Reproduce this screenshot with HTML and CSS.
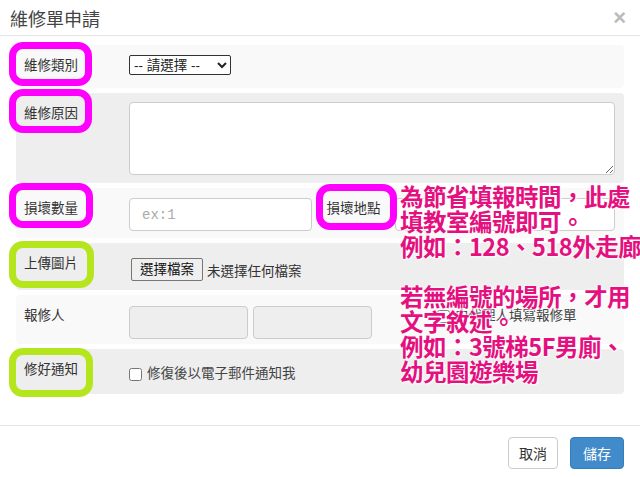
FILE: index.html
```html
<!DOCTYPE html>
<html lang="zh-Hant">
<head>
    <meta charset="UTF-8">
    <meta name="viewport" content="width=device-width, initial-scale=1.0">
    <title>維修單申請</title>
    <link rel="stylesheet" href="styles.css">
</head>
<body>
    <div class="modal">
        <div class="modal-header">
            <h4 class="modal-title">維修單申請</h4>
            <span class="close">&times;</span>
        </div>

        <div class="modal-body">
            <div class="form-row light row-type">
                <label class="row-label">維修類別</label>
                <div class="row-field">
                    <select class="type-select">
                        <option>-- 請選擇 --</option>
                    </select>
                </div>
            </div>

            <div class="form-row dark row-reason">
                <label class="row-label">維修原因</label>
                <div class="row-field">
                    <textarea class="reason"></textarea>
                </div>
            </div>

            <div class="form-row light row-amount">
                <label class="row-label">損壞數量</label>
                <div class="row-field split">
                    <input type="text" class="text-input amount" placeholder="ex:1">
                    <label class="inline-label">損壞地點</label>
                    <input type="text" class="text-input place">
                </div>
            </div>

            <div class="form-row dark row-upload">
                <label class="row-label">上傳圖片</label>
                <div class="row-field">
                    <span class="file-btn">選擇檔案</span>
                    <span class="file-name">未選擇任何檔案</span>
                </div>
            </div>

            <div class="form-row light row-reporter">
                <label class="row-label">報修人</label>
                <div class="row-field split">
                    <input type="text" class="text-input reporter" disabled>
                    <input type="text" class="text-input reporter" disabled>
                    <label class="check proxy"><input type="checkbox"> 由代理人填寫報修單</label>
                </div>
            </div>

            <div class="form-row dark row-notify">
                <label class="row-label">修好通知</label>
                <div class="row-field">
                    <label class="check"><input type="checkbox"> 修復後以電子郵件通知我</label>
                </div>
            </div>
        </div>

        <div class="modal-footer">
            <button class="btn btn-default">取消</button>
            <button class="btn btn-primary">儲存</button>
        </div>

        <!-- markup drawn over the screenshot -->
        <div class="mark pink m-type"></div>
        <div class="mark pink m-reason"></div>
        <div class="mark pink m-amount"></div>
        <div class="mark pink m-place"></div>
        <div class="mark green m-upload"></div>
        <div class="mark green m-notify"></div>

        <div class="note">
            為節省填報時間，此處<br>
            填教室編號即可。<br>
            例如：128、518外走廊<br>
            <br>
            若無編號的場所，才用<br>
            文字敘述。<br>
            例如：3號梯5F男廁、<br>
            幼兒園遊樂場
        </div>
    </div>
</body>
</html>
```

FILE: styles.css
```css
body {
    margin: 0;
    padding: 0;
    background-color: #fff;
    font-family: "Liberation Sans", "Noto Sans CJK TC", sans-serif;
    color: #333;
}
.modal {
    position: relative;
    width: 640px;
    height: 477px;
    overflow: hidden;
}
.modal-header {
    height: 35px;
    padding: 0 14px 0 10px;
    display: flex;
    align-items: center;
    justify-content: space-between;
    border-bottom: 1px solid #e5e5e5;
}
.modal-title {
    margin: 0;
    font-size: 18px;
    font-weight: normal;
    color: #444;
}
.close {
    font-size: 22px;
    font-weight: bold;
    color: #bbb;
    line-height: 1;
}
.modal-body {
    padding: 9px 16px 26px 16px;
}
.form-row {
    display: flex;
    margin-bottom: 5px;
    border-radius: 4px;
}
.form-row.light {
    background-color: #f9f9f9;
}
.form-row.dark {
    background-color: #eee;
}
.row-label {
    width: 105px;
    padding: 12px 0 0 8px;
    font-size: 13.5px;
    line-height: 18px;
    flex-shrink: 0;
}
.row-field {
    flex: 1;
    display: flex;
    align-items: flex-start;
    padding-right: 9px;
}
.row-type { height: 43px; }
.row-type .row-field { padding-top: 10px; }
.type-select {
    width: 102px;
    height: 20px;
    font-size: 13.5px;
    font-family: "Liberation Sans", "Noto Sans CJK TC", sans-serif;
    border: 1px solid #333;
    border-radius: 2px;
    background-color: #fff;
    color: #222;
    padding: 0;
}
.row-reason { height: 90px; }
.row-reason .row-field { padding-top: 9px; }
.reason {
    width: 100%;
    height: 73px;
    box-sizing: border-box;
    border: 1px solid #ccc;
    border-radius: 4px;
    background: #fff;
}
.row-amount { height: 50px; }
.row-amount .row-field { padding-top: 10px; }
.text-input {
    height: 33px;
    box-sizing: border-box;
    border: 1px solid #ccc;
    border-radius: 4px;
    padding: 6px 12px;
    font-size: 14px;
    font-family: "Liberation Mono", "Noto Sans CJK TC", monospace;
    background: #fff;
}
.text-input::placeholder {
    color: #aaa;
}
.amount {
    width: 183px;
}
.inline-label {
    width: 83px;
    padding-top: 2px;
    text-align: center;
    font-size: 13.5px;
    line-height: 18px;
    flex-shrink: 0;
}
.place {
    flex: 1;
}
.row-upload { height: 47px; }
.row-upload .row-field {
    padding-top: 15px;
    align-items: center;
    align-self: flex-start;
}
.file-btn {
    margin-left: 2px;
    padding: 2px 8px;
    font-size: 13.5px;
    border: 1px solid #767676;
    border-radius: 2px;
    background-color: #efefef;
    color: #111;
    line-height: 17px;
}
.file-name {
    margin-left: 4px;
    font-size: 13.5px;
}
.row-reporter { height: 49px; }
.row-reporter .row-field { padding-top: 11px; }
.reporter {
    width: 119px;
    margin-right: 5px;
    background-color: #eee;
}
.check {
    display: flex;
    align-items: center;
    font-size: 13.5px;
    line-height: 18px;
    color: #444;
}
.check input {
    margin: 0 5px 0 0;
    width: 13px;
    height: 13px;
}
.proxy {
    margin-left: 60px;
    margin-top: 1px;
}
.row-notify { height: 45px; }
.row-notify .row-field { padding-top: 16px; }

.modal-footer {
    border-top: 1px solid #e5e5e5;
    padding: 11px 16px 0 0;
    display: flex;
    justify-content: flex-end;
    gap: 12px;
}
.btn {
    height: 32px;
    padding: 0 10px;
    font-size: 14px;
    font-family: "Liberation Sans", "Noto Sans CJK TC", sans-serif;
    border-radius: 4px;
    border: 1px solid #ccc;
    cursor: pointer;
}
.btn-default {
    background-color: #fff;
    color: #333;
}
.btn-primary {
    background-color: #428bca;
    border-color: #357ebd;
    color: #fff;
    padding: 0 12px;
}

.mark {
    position: absolute;
    box-sizing: border-box;
    border: 7px solid;
    border-radius: 14px;
}
.mark.pink {
    border-color: #f0f;
}
.mark.green {
    border-color: #b5e61d;
}
.m-type { left: 9px; top: 42px; width: 83px; height: 44px; }
.m-reason { left: 9px; top: 89px; width: 83px; height: 44px; }
.m-amount { left: 9px; top: 183px; width: 84px; height: 45px; }
.m-place { left: 316px; top: 184px; width: 81px; height: 46px; }
.m-upload { left: 9px; top: 241px; width: 85px; height: 47px; }
.m-notify { left: 9px; top: 348px; width: 84px; height: 49px; }

.note {
    position: absolute;
    left: 400px;
    top: 184px;
    width: 260px;
    font-family: "Noto Sans CJK TC", sans-serif;
    font-size: 23.5px;
    font-weight: bold;
    line-height: 25px;
    color: #e5107f;
    letter-spacing: -0.5px;
    white-space: nowrap;
    text-shadow: 0 0 2px #fff, 0 0 3px #fff, 1px 1px 2px rgba(255, 255, 255, 0.9);
}
```
